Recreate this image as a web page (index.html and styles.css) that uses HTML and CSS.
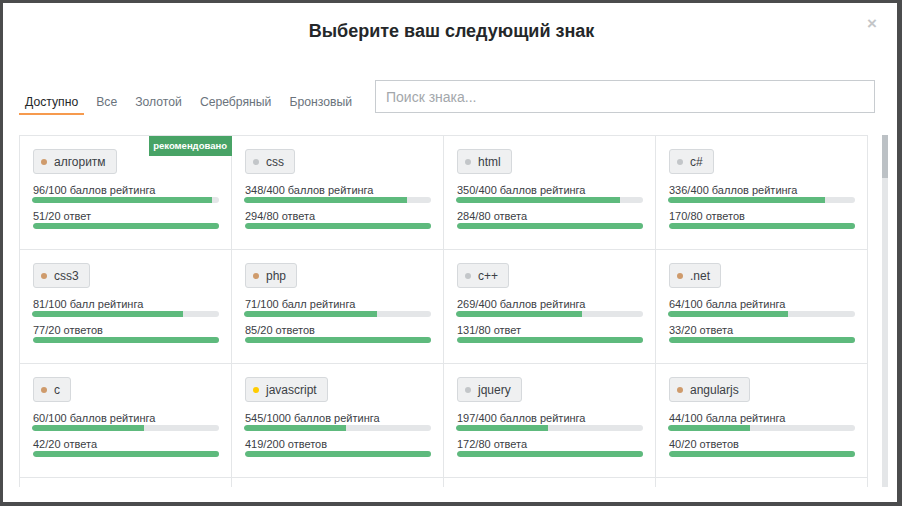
FILE: index.html
```html
<!DOCTYPE html>
<html lang="ru">
<head>
<meta charset="utf-8">
<title>Выберите ваш следующий знак</title>
<link rel="stylesheet" href="styles.css">
</head>
<body>
<div class="modal">
  <button class="close" aria-label="Закрыть">&#215;</button>
  <header class="header">
    <h1 class="title">Выберите ваш следующий знак</h1>
  </header>
  <div class="toolbar">
    <nav class="tabs">
      <a class="tab active">Доступно</a>
      <a class="tab">Все</a>
      <a class="tab">Золотой</a>
      <a class="tab">Серебряный</a>
      <a class="tab">Бронзовый</a>
    </nav>
    <input class="search" type="text" placeholder="Поиск знака...">
  </div>
  <div class="scroller">
    <div class="viewport">
      <div class="grid">
        <div class="card">
          <span class="ribbon">рекомендовано</span>
          <span class="tag"><i class="dot bronze"></i>алгоритм</span>
          <div class="label first">96/100 баллов рейтинга</div>
          <div class="bar rep"><div class="fill" style="width:96%"></div></div>
          <div class="label">51/20 ответ</div>
          <div class="bar"><div class="fill" style="width:100%"></div></div>
        </div>
        <div class="card">
          <span class="tag"><i class="dot silver"></i>css</span>
          <div class="label first">348/400 баллов рейтинга</div>
          <div class="bar rep"><div class="fill" style="width:87%"></div></div>
          <div class="label">294/80 ответа</div>
          <div class="bar"><div class="fill" style="width:100%"></div></div>
        </div>
        <div class="card">
          <span class="tag"><i class="dot silver"></i>html</span>
          <div class="label first">350/400 баллов рейтинга</div>
          <div class="bar rep"><div class="fill" style="width:87.5%"></div></div>
          <div class="label">284/80 ответа</div>
          <div class="bar"><div class="fill" style="width:100%"></div></div>
        </div>
        <div class="card">
          <span class="tag"><i class="dot silver"></i>c#</span>
          <div class="label first">336/400 баллов рейтинга</div>
          <div class="bar rep"><div class="fill" style="width:84%"></div></div>
          <div class="label">170/80 ответов</div>
          <div class="bar"><div class="fill" style="width:100%"></div></div>
        </div>

        <div class="card">
          <span class="tag"><i class="dot bronze"></i>css3</span>
          <div class="label first">81/100 балл рейтинга</div>
          <div class="bar rep"><div class="fill" style="width:81%"></div></div>
          <div class="label">77/20 ответов</div>
          <div class="bar"><div class="fill" style="width:100%"></div></div>
        </div>
        <div class="card">
          <span class="tag"><i class="dot bronze"></i>php</span>
          <div class="label first">71/100 балл рейтинга</div>
          <div class="bar rep"><div class="fill" style="width:71%"></div></div>
          <div class="label">85/20 ответов</div>
          <div class="bar"><div class="fill" style="width:100%"></div></div>
        </div>
        <div class="card">
          <span class="tag"><i class="dot silver"></i>c++</span>
          <div class="label first">269/400 баллов рейтинга</div>
          <div class="bar rep"><div class="fill" style="width:67.25%"></div></div>
          <div class="label">131/80 ответ</div>
          <div class="bar"><div class="fill" style="width:100%"></div></div>
        </div>
        <div class="card">
          <span class="tag"><i class="dot bronze"></i>.net</span>
          <div class="label first">64/100 балла рейтинга</div>
          <div class="bar rep"><div class="fill" style="width:64%"></div></div>
          <div class="label">33/20 ответа</div>
          <div class="bar"><div class="fill" style="width:100%"></div></div>
        </div>

        <div class="card">
          <span class="tag"><i class="dot bronze"></i>c</span>
          <div class="label first">60/100 баллов рейтинга</div>
          <div class="bar rep"><div class="fill" style="width:60%"></div></div>
          <div class="label">42/20 ответа</div>
          <div class="bar"><div class="fill" style="width:100%"></div></div>
        </div>
        <div class="card">
          <span class="tag"><i class="dot gold"></i>javascript</span>
          <div class="label first">545/1000 баллов рейтинга</div>
          <div class="bar rep"><div class="fill" style="width:54.5%"></div></div>
          <div class="label">419/200 ответов</div>
          <div class="bar"><div class="fill" style="width:100%"></div></div>
        </div>
        <div class="card">
          <span class="tag"><i class="dot silver"></i>jquery</span>
          <div class="label first">197/400 баллов рейтинга</div>
          <div class="bar rep"><div class="fill" style="width:49.25%"></div></div>
          <div class="label">172/80 ответа</div>
          <div class="bar"><div class="fill" style="width:100%"></div></div>
        </div>
        <div class="card">
          <span class="tag"><i class="dot bronze"></i>angularjs</span>
          <div class="label first">44/100 балла рейтинга</div>
          <div class="bar rep"><div class="fill" style="width:44%"></div></div>
          <div class="label">40/20 ответов</div>
          <div class="bar"><div class="fill" style="width:100%"></div></div>
        </div>

        <div class="card"></div>
        <div class="card"></div>
        <div class="card"></div>
        <div class="card"></div>
      </div>
    </div>
    <div class="track"><div class="thumb"></div></div>
  </div>
</div>
</body>
</html>
```

FILE: styles.css
```css
* { box-sizing: border-box; }

html, body {
  margin: 0;
  height: 100%;
}

body {
  background: #4b4c4d;
  padding: 3px 5px 4px 3px;
  font-family: "Liberation Sans", Arial, sans-serif;
  overflow: hidden;
}

.modal {
  position: relative;
  width: 894px;
  height: 499px;
  background: #ffffff;
  padding: 0 9px 0 16px;
}

.close {
  position: absolute;
  top: 11px;
  right: 20px;
  border: 0;
  background: none;
  padding: 0;
  font-family: "Liberation Sans", Arial, sans-serif;
  font-size: 17px;
  font-weight: bold;
  line-height: 20px;
  color: #c4c6c8;
  cursor: pointer;
}

.header {
  padding-top: 12px;
  padding-right: 4px;
}

.title {
  margin: 0;
  text-align: center;
  font-size: 18px;
  font-weight: bold;
  line-height: 32px;
  color: #242729;
}

.toolbar {
  display: flex;
  align-items: flex-end;
  height: 35px;
  margin-top: 33px;
}

.tabs {
  display: flex;
  gap: 6px;
}

.tab {
  display: block;
  padding: 0 6px 3px;
  font-size: 12.2px;
  line-height: 16px;
  color: #6a737c;
  border-bottom: 2px solid transparent;
  cursor: pointer;
}

.tab.active {
  color: #242729;
  border-bottom-color: #f69a4e;
}

.search {
  align-self: flex-start;
  margin-left: auto;
  margin-right: 13px;
  width: 500px;
  height: 33px;
  border: 1px solid #c8ccd0;
  border-radius: 0;
  padding: 0 10px;
  font-family: "Liberation Sans", Arial, sans-serif;
  font-size: 14px;
  color: #242729;
  outline: none;
}

.search::placeholder {
  color: #a3a7ab;
}

.scroller {
  display: flex;
  margin-top: 20px;
  height: 352px;
}

.viewport {
  width: 849px;
  height: 352px;
  overflow: hidden;
}

.grid {
  display: grid;
  grid-template-columns: repeat(4, 212px);
  grid-auto-rows: 114px;
  border-left: 1px solid #e4e6e8;
  border-top: 1px solid #e4e6e8;
  width: 849px;
}

.card {
  position: relative;
  border-right: 1px solid #e4e6e8;
  border-bottom: 1px solid #e4e6e8;
  padding: 13px 12px 0 13px;
}

.ribbon {
  position: absolute;
  top: 0;
  right: -1px;
  height: 20px;
  padding: 0 5px 0 4px;
  background: #48a366;
  color: #ffffff;
  font-size: 9.5px;
  font-weight: bold;
  line-height: 20px;
}

.tag {
  display: inline-flex;
  align-items: center;
  height: 25px;
  padding: 0 10px 0 7px;
  border: 1px solid #d6d9dc;
  border-radius: 3px;
  background: #eff0f1;
  font-size: 12px;
  color: #3b4045;
}

.dot {
  display: block;
  width: 6px;
  height: 6px;
  border-radius: 50%;
  margin-right: 7px;
}

.dot.bronze { background: #cf9b6c; }
.dot.silver { background: #c3c6c9; }
.dot.gold { background: #ffcc01; }

.label {
  margin-top: 7px;
  font-size: 11px;
  line-height: 13px;
  color: #3b4045;
}

.label.first {
  margin-top: 10px;
}

.bar {
  height: 6px;
  border-radius: 3px;
  background: #e4e6e8;
  overflow: hidden;
}

.bar.rep {
  margin-left: -1px;
}

.fill {
  height: 100%;
  background: #5eba7d;
  border-radius: 3px 0 0 3px;
}

.track {
  margin-left: 14px;
  width: 6px;
  height: 352px;
  background: #e4e6e8;
}

.thumb {
  width: 6px;
  height: 43px;
  background: #bcc1c5;
}
```
